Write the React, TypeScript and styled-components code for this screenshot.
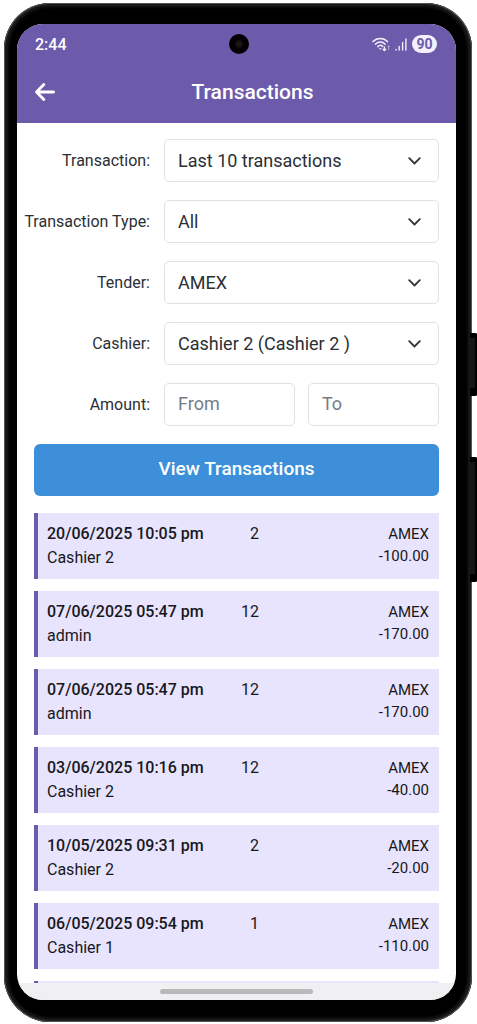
import React from "react";
import styled, { createGlobalStyle } from "styled-components";

const GlobalStyle = createGlobalStyle`
  *, *::before, *::after { box-sizing: border-box; }
  body {
    margin: 0;
    background: #ffffff;
    color: #2b3035;
    font-family: Roboto, "Liberation Sans", sans-serif;
    overflow: hidden;
  }
`;

const Phone = styled.div`
  position: relative;
  display: flex;
  height: calc(100vh - 5px);
  margin: 3px 5px 2px 4px;
  padding: 21px 16px 22px 13px;
  border-radius: 46px;
  background: #000000;
  box-shadow: inset 0 0 0 1px #555555, inset 0 0 3px 4px #1c1c1c;
`;

const SideButton = styled.span<{ $top: number; $length: number }>`
  position: absolute;
  right: -5px;
  top: ${(p) => p.$top}%;
  width: 7px;
  height: ${(p) => p.$length}%;
  border: solid #000000;
  border-width: 5px 2px 8px 0;
  border-radius: 0 2px 2px 0;
  background: #161616;
`;

const Screen = styled.div`
  position: relative;
  display: flex;
  flex: 1;
  flex-direction: column;
  min-width: 0;
  overflow: hidden;
  border-radius: 26px;
  background: #ffffff;
`;

const Header = styled.header`
  color: #ffffff;
  background: #6b5baa;
`;

const StatusBar = styled.div`
  display: flex;
  align-items: center;
  justify-content: space-between;
  height: 40px;
  padding: 0 19px 0 18px;
  font-size: 16px;
  font-weight: 500;
`;

const StatusIcons = styled.div`
  display: flex;
  align-items: center;
  gap: 5px;
`;

const Battery = styled.span`
  width: 25px;
  border-radius: 9px;
  background: #f2f0fa;
  color: #6b5baa;
  font-size: 14px;
  font-weight: 700;
  line-height: 18px;
  text-align: center;
`;

const Camera = styled.span`
  position: absolute;
  top: 10px;
  left: calc(50% + 2px);
  width: 20px;
  height: 20px;
  margin-left: -10px;
  border-radius: 50%;
  background: radial-gradient(circle, #1c1512 0 2px, #000000 5px);
`;

const TitleBar = styled.div`
  display: grid;
  grid-template-columns: 40px 1fr 8px;
  align-items: center;
  height: 59px;
  padding: 0 8px 4px;
`;

const BackButton = styled.button`
  display: flex;
  justify-content: center;
  padding: 8px 0;
  border: 0;
  background: none;
  color: inherit;
`;

const Title = styled.h1`
  margin: 0;
  font-size: 21px;
  font-weight: 500;
  line-height: 24px;
  text-align: center;
`;

const Content = styled.main`
  flex: 1;
  min-height: 0;
  overflow-y: auto;
  padding: 16px 17px 0;
  scrollbar-width: none;
`;

const Form = styled.form`
  display: flex;
  flex-direction: column;
  gap: 18px;
`;

const Row = styled.div`
  display: grid;
  grid-template-columns: 116px minmax(0, 1fr);
  gap: 14px;
  align-items: center;
`;

const Label = styled.label`
  display: flex;
  justify-content: flex-end;
  font-size: 16px;
  line-height: 20px;
  white-space: nowrap;
`;

const SelectBox = styled.div`
  position: relative;
  display: flex;
  align-items: center;
`;

const Chevron = styled.svg`
  position: absolute;
  right: 18px;
  pointer-events: none;
`;

const Select = styled.select`
  width: 100%;
  height: 43px;
  padding: 0 40px 0 13px;
  border: 1px solid #dee2e6;
  border-radius: 5px;
  background: #ffffff;
  color: #2b3035;
  font: 400 18px Roboto, sans-serif;
  appearance: none;
`;

const AmountFields = styled.div`
  display: grid;
  grid-template-columns: 1fr 1fr;
  gap: 13px;
`;

const AmountInput = styled.input`
  width: 100%;
  min-width: 0;
  height: 43px;
  padding: 0 13px 2px;
  border: 1px solid #dee2e6;
  border-radius: 5px;
  background: #ffffff;
  color: #2b3035;
  font: 400 18px Roboto, sans-serif;
  &::placeholder { color: #747d86; opacity: 1; }
`;

const SubmitButton = styled.button`
  height: 52px;
  padding: 0 0 3px;
  border: 0;
  border-radius: 6px;
  background: #3d8fd9;
  color: #ffffff;
  font: 500 19px Roboto, sans-serif;
`;

const TransactionList = styled.ul`
  display: flex;
  flex-direction: column;
  gap: 12px;
  margin: 17px 0 0;
  padding: 0;
  list-style: none;
`;

const Card = styled.li`
  display: grid;
  grid-template-columns: 44% 12% 1fr;
  flex-shrink: 0;
  min-height: 66px;
  padding: 9px 10px 9px 9px;
  border-left: 4px solid #6b5baa;
  background: #e8e4fe;
  color: #18181c;
  font-size: 16px;
  line-height: 24px;
`;

const DateTime = styled.div`
  font-weight: 500;
  white-space: nowrap;
`;

const Count = styled.div`
  padding-right: 2px;
  text-align: right;
`;

const Payment = styled.div`
  padding-top: 1px;
  font-size: 15px;
  line-height: 22px;
  text-align: right;
`;

const HomeBar = styled.footer`
  display: flex;
  align-items: center;
  justify-content: center;
  height: 17px;
  background: #f0f0f2;
`;

const HomeHandle = styled.span`
  width: 35%;
  height: 5px;
  border-radius: 3px;
  background: #b9b9ba;
`;

const selects = [
  { id: "transaction", label: "Transaction:", value: "Last 10 transactions" },
  { id: "type", label: "Transaction Type:", value: "All" },
  { id: "tender", label: "Tender:", value: "AMEX" },
  { id: "cashier", label: "Cashier:", value: "Cashier 2 (Cashier 2 )" },
];

const transactions = [
  { date: "20/06/2025 10:05 pm", user: "Cashier 2", count: 2, amount: "-100.00" },
  { date: "07/06/2025 05:47 pm", user: "admin", count: 12, amount: "-170.00" },
  { date: "07/06/2025 05:47 pm", user: "admin", count: 12, amount: "-170.00" },
  { date: "03/06/2025 10:16 pm", user: "Cashier 2", count: 12, amount: "-40.00" },
  { date: "10/05/2025 09:31 pm", user: "Cashier 2", count: 2, amount: "-20.00" },
  { date: "06/05/2025 09:54 pm", user: "Cashier 1", count: 1, amount: "-110.00" },
];

function WifiIcon() {
  return (
    <svg width="18" height="15" viewBox="0 0 18 15" fill="none" stroke="#f2f0fa" strokeWidth="1.5" strokeLinecap="round" aria-hidden="true">
      <path d="M1 4.6C5 .3 11.500 .3 15.500 4.600M3.400 7.200C6.200 4.200 10.300 4.200 13.100 7.200M5.800 9.600C7.400 8 9.200 8 10.600 9.400" />
      <circle cx="8.200" cy="11.700" r=".6" fill="#f2f0fa" strokeWidth=".6" />
      <path d="M12.400 9.800V13M11.100 12.200L12.400 13.600L13.700 12.200" strokeWidth="1.300" />
      <path d="M16.600 12.800V9M15.500 10L16.600 8.900L17.600 10" strokeWidth=".8" opacity=".6" />
    </svg>
  );
}

function SignalIcon() {
  return (
    <svg width="12" height="13" viewBox="0 0 12 13" fill="none" stroke="#f2f0fa" strokeWidth="1.4" strokeLinecap="round" aria-hidden="true">
      <path d="M1 11.500V12M4.200 8.500V12M7.600 4.500V12M10.900 1V12" />
    </svg>
  );
}

export default function App() {
  return (
    <>
      <GlobalStyle />
      <Phone>
        <SideButton $top={32.4} $length={6.2} />
        <SideButton $top={44.6} $length={12.2} />
        <Screen>
          <Header>
            <StatusBar>
              <span>2:44</span>
              <StatusIcons>
                <WifiIcon />
                <SignalIcon />
                <Battery>90</Battery>
              </StatusIcons>
            </StatusBar>
            <Camera />
            <TitleBar>
              <BackButton type="button" aria-label="Back">
                <svg width="20" height="18" viewBox="0 0 20 18" fill="none" stroke="currentColor" strokeWidth="2.800" strokeLinecap="round" strokeLinejoin="round" aria-hidden="true">
                  <path d="M18.600 9H1.500M8.800 1.500L1.500 9L8.800 16.500" />
                </svg>
              </BackButton>
              <Title>Transactions</Title>
            </TitleBar>
          </Header>
          <Content>
            <Form onSubmit={(e: React.FormEvent) => e.preventDefault()}>
              {selects.map((s) => (
                <Row key={s.id}>
                  <Label htmlFor={s.id}>{s.label}</Label>
                  <SelectBox>
                    <Select id={s.id}>
                      <option>{s.value}</option>
                    </Select>
                    <Chevron width="13" height="8" viewBox="0 0 13 8" fill="none" stroke="#343a40" strokeWidth="1.900" strokeLinecap="round" strokeLinejoin="round" aria-hidden="true">
                      <path d="M1.200 1.200L6.500 6.500L11.800 1.200" />
                    </Chevron>
                  </SelectBox>
                </Row>
              ))}
              <Row>
                <Label htmlFor="amount-from">Amount:</Label>
                <AmountFields>
                  <AmountInput id="amount-from" placeholder="From" />
                  <AmountInput aria-label="Amount to" placeholder="To" />
                </AmountFields>
              </Row>
              <SubmitButton type="submit">View Transactions</SubmitButton>
            </Form>
            <TransactionList>
              {transactions.map((t, i) => (
                <Card key={i}>
                  <div>
                    <DateTime>{t.date}</DateTime>
                    <div>{t.user}</div>
                  </div>
                  <Count>{t.count}</Count>
                  <Payment>
                    <div>AMEX</div>
                    <div>{t.amount}</div>
                  </Payment>
                </Card>
              ))}
              <Card />
            </TransactionList>
          </Content>
          <HomeBar>
            <HomeHandle />
          </HomeBar>
        </Screen>
      </Phone>
    </>
  );
}
